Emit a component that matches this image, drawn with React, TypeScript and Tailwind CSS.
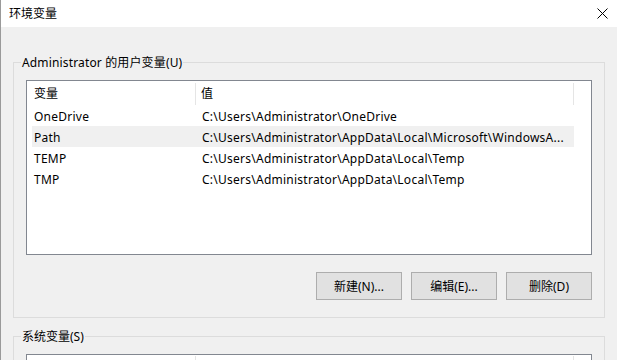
import React from 'react';

const font = { fontFamily: '"Noto Sans", "Noto Sans CJK SC", sans-serif' };

const userVars = [
  { name: 'OneDrive', value: 'C:\\Users\\Administrator\\OneDrive' },
  { name: 'Path', value: 'C:\\Users\\Administrator\\AppData\\Local\\Microsoft\\WindowsA...', selected: true },
  { name: 'TEMP', value: 'C:\\Users\\Administrator\\AppData\\Local\\Temp' },
  { name: 'TMP', value: 'C:\\Users\\Administrator\\AppData\\Local\\Temp' },
];

const ListHeader = () => (
  <div className="flex h-[24px] items-center pt-[2px]">
    <div className="flex h-full w-[169px] items-center border-r border-[#e5e5e5] pl-[7px]">变量</div>
    <div className="flex h-full w-[378px] items-center border-r border-[#e5e5e5] pl-[5px]">值</div>
  </div>
);

const VarList = ({ rows, height }: { rows: typeof userVars; height: string }) => (
  <div className={`border border-[#828790] bg-white ${height}`}>
    <ListHeader />
    <div className="flex flex-col pl-[5px] tracking-[0.25px]">
      {rows.map((r) => (
        <div
          key={r.name}
          className={`flex h-[21px] w-[542px] items-center pt-[3px] ${r.selected ? 'bg-[#f0f0f0]' : ''}`}
        >
          <div className="w-[164px] pl-[2px]">{r.name}</div>
          <div className="pl-[6px] whitespace-nowrap">{r.value}</div>
        </div>
      ))}
    </div>
  </div>
);

const Button = ({ label }: { label: string }) => (
  <button className="flex h-[28px] w-[86px] items-center justify-center border border-[#adadad] bg-[#e1e1e1] pt-[1px] text-[12px] text-black">
    {label}
  </button>
);

export default function App() {
  return (
    <div className="flex h-[360px] w-[617px] flex-col overflow-hidden border-l border-[#9a9a9a] text-[12px] text-black" style={font}>
      <div className="flex h-[27px] shrink-0 items-center justify-between bg-white pl-[8px] pr-[9px]">
        <span>环境变量</span>
        <svg width="11" height="11" viewBox="0 0 11 11" className="text-black">
          <path d="M0.5 0.5 L10.5 10.5 M10.5 0.5 L0.5 10.5" stroke="currentColor" strokeWidth="1" />
        </svg>
      </div>
      <div className="flex flex-1 flex-col gap-[10px] bg-[#f0f0f0] pl-[12px] pr-[12px] pt-[27px]">
        <fieldset className="border border-[#dcdcdc] px-[12px] pb-[17px] pt-[9px]">
          <legend className="ml-[-5px] px-[1px] leading-[17px] tracking-[0.15px]">Administrator 的用户变量(U)</legend>
          <VarList rows={userVars} height="h-[175px]" />
          <div className="mt-[17px] flex justify-end gap-[9px]">
            <Button label="新建(N)..." />
            <Button label="编辑(E)..." />
            <Button label="删除(D)" />
          </div>
        </fieldset>
        <fieldset className="border border-[#dcdcdc] px-[12px] pt-[9px]">
          <legend className="ml-[-5px] px-[1px] leading-[17px]">系统变量(S)</legend>
          <div className="h-[60px] border border-[#828790] bg-white pt-[1px]">
            <div className="flex h-[24px]">
              <div className="h-full w-[169px] border-r border-[#e5e5e5]" />
              <div className="h-full w-[378px] border-r border-[#e5e5e5]" />
            </div>
          </div>
        </fieldset>
      </div>
    </div>
  );
}
